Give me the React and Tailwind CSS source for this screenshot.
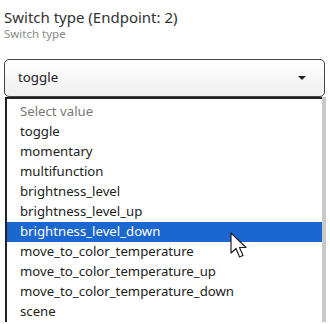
import React from "react";

const items = [
  "Select value",
  "toggle",
  "momentary",
  "multifunction",
  "brightness_level",
  "brightness_level_up",
  "brightness_level_down",
  "move_to_color_temperature",
  "move_to_color_temperature_up",
  "move_to_color_temperature_down",
  "scene",
];

export default function App() {
  return (
    <div
      className="relative w-[330px] h-[324px] overflow-hidden bg-white text-[#222]"
      style={{ fontFamily: '"Noto Sans", "Open Sans", sans-serif' }}
    >
      <div className="pl-1 pt-[7px]">
        <div className="text-[15px] leading-[20px] text-[#333]">Switch type (Endpoint: 2)</div>
        <div className="text-[11.5px] leading-[14px] text-[#8a8a8a]">Switch type</div>
      </div>
      <div className="ml-1 mr-[5px] mt-[18px] h-[38px] rounded-[5px] border border-[#444] bg-gradient-to-b from-white to-[#efefef] flex items-center justify-between pl-[13px] pr-[18px]">
        <span className="text-[13.3px] text-[#222]">toggle</span>
        <svg width="8" height="4" viewBox="0 0 8 4">
          <path d="M0 0 L8 0 L4 4 Z" fill="#222" />
        </svg>
      </div>
      <div className="ml-[5px] mr-[4px] flex">
        <div className="flex-1 border-l-2 border-t-2 border-[#222] bg-white">
          <div className="pt-[3px]">
            {items.map((it, i) => (
              <div
                key={it}
                className={
                  "h-[20px] flex items-center pl-[13px] text-[13.2px] " +
                  (i === 6
                    ? "bg-[#1b66cf] text-white"
                    : i === 0
                    ? "text-[#777]"
                    : "text-[#222]")
                }
              >
                {it}
              </div>
            ))}
          </div>
        </div>
        <div className="w-[4px] bg-[#c8c8c8]" />
      </div>
      <svg
        className="absolute left-[230px] top-[232px]"
        width="20"
        height="28"
        viewBox="0 0 20 28"
      >
        <path
          d="M1 1 L1 21 L6 16.5 L9.5 25 L13 23.5 L9.5 15.5 L16 15.5 Z"
          fill="white"
          stroke="#222"
          strokeWidth="1.2"
          strokeLinejoin="round"
        />
      </svg>
    </div>
  );
}
